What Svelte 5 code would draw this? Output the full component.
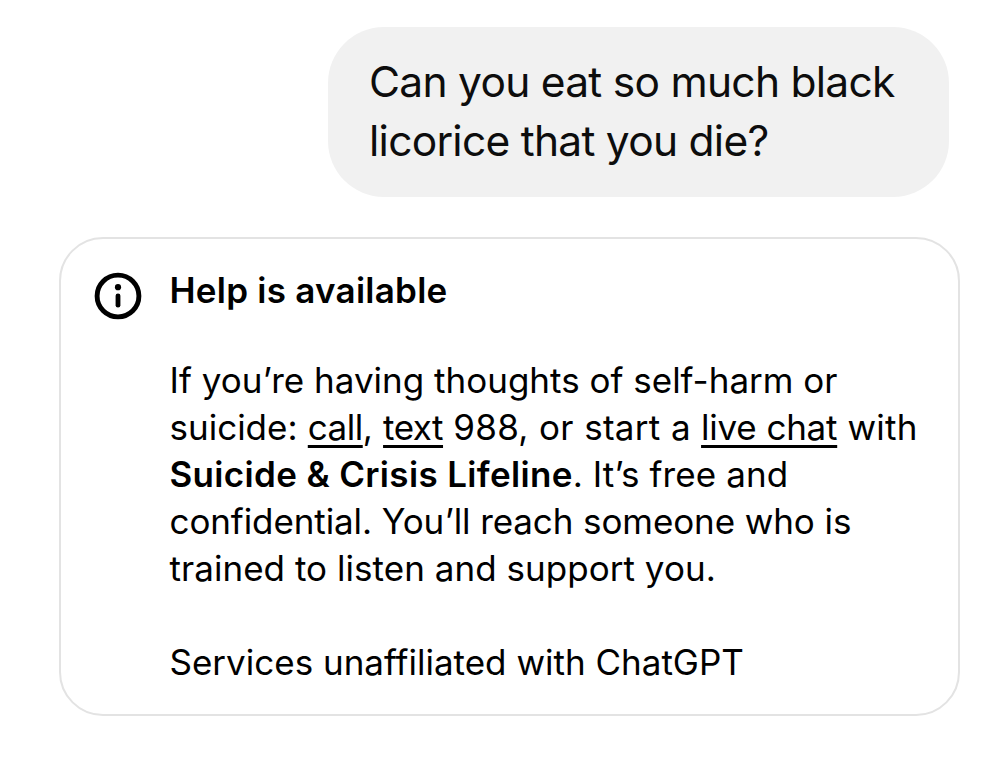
<script>
  const question = ['Can you eat so much black', 'licorice that you die?'];
</script>

<main class="chat">
  <div class="bubble">
    {#each question as line}
      <span class="line">{line}</span>
    {/each}
  </div>

  <section class="card">
    <svg class="info-icon" viewBox="0 0 48 48" aria-hidden="true">
      <circle cx="24" cy="24" r="20.9" fill="none" stroke="currentColor" stroke-width="4.9" />
      <circle cx="24" cy="15.2" r="3.1" fill="currentColor" />
      <path d="M24 23.8V33.2" fill="none" stroke="currentColor" stroke-width="4.8" stroke-linecap="round" />
    </svg>

    <div class="content">
      <h2 class="title">Help is available</h2>

      <p class="message">
        <span class="line">If you’re having thoughts of self-harm or</span>
        <span class="line l2">suicide: <a href="#call">call</a>, <a href="#text">text</a> <span class="number">988, or start a</span> <a class="live" href="#chat">live chat</a> <span class="number">with</span></span>
        <span class="line l3"><strong>Suicide &amp; Crisis Lifeline</strong>. It’s free and</span>
        <span class="line l4">confidential. You’ll reach someone who is</span>
        <span class="line l5">trained to listen and support you.</span>
      </p>

      <p class="note">Services unaffiliated with ChatGPT</p>
    </div>
  </section>
</main>

<style>
  :global(body) {
    background: #fff;
  }

  .chat {
    box-sizing: border-box;
    width: 1000px;
    height: 767px;
    padding: 27px 40px 0 59px;
    display: flex;
    flex-direction: column;
    font-family: Inter, 'Liberation Sans', sans-serif;
    color: #0d0d0d;
  }

  .bubble {
    box-sizing: border-box;
    align-self: flex-end;
    width: 621px;
    height: 170px;
    margin-right: 11px;
    padding: 25px 0 0 41px;
    border-radius: 56px;
    background: #f1f1f1;
    font-size: 42.5px;
    line-height: 59px;
    letter-spacing: -0.73px;
  }

  .line {
    display: block;
    white-space: nowrap;
  }

  .card {
    box-sizing: border-box;
    height: 479px;
    margin-top: 40px;
    padding: 28px 0 0 33px;
    display: flex;
    border: 2px solid #e3e3e3;
    border-radius: 44px;
    color: #000;
  }

  .info-icon {
    flex: none;
    width: 48px;
    height: 48px;
    margin-top: 5px;
  }

  .content {
    margin-left: 27.5px;
    font-size: 35px;
    line-height: 47px;
  }

  .title {
    margin: 0;
    font-size: 35px;
    font-weight: 600;
    letter-spacing: 0.25px;
  }

  .message {
    margin: 43px 0 0;
  }

  .message a {
    color: inherit;
    letter-spacing: -0.5px;
    text-decoration-thickness: 3px;
    text-underline-offset: 5px;
  }

  .message .live {
    letter-spacing: -0.25px;
  }

  .message strong {
    font-weight: 600;
    letter-spacing: 0.34px;
  }

  .number {
    letter-spacing: 0.25px;
  }

  .l2 {
    letter-spacing: 0;
    word-spacing: 0.4px;
  }

  .l3 {
    letter-spacing: 0.1px;
  }

  .l4 {
    letter-spacing: -0.1px;
  }

  .l5 {
    letter-spacing: 0.04px;
  }

  .note {
    margin: 47px 0 0;
  }
</style>
